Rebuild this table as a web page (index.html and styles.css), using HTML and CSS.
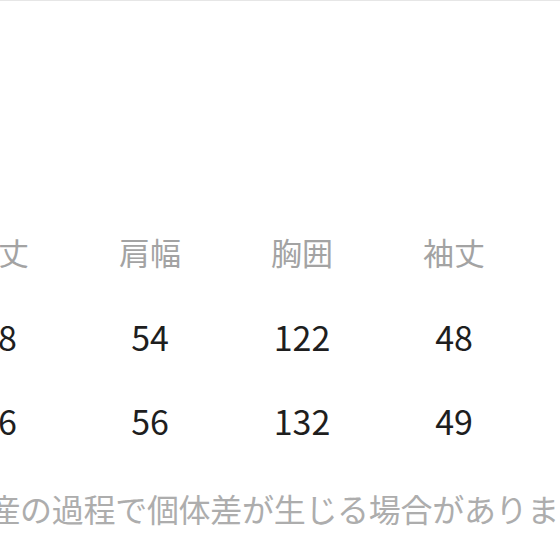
FILE: index.html
```html
<!DOCTYPE html>
<html lang="ja">
<head>
<meta charset="utf-8">
<link rel="stylesheet" href="styles.css">
</head>
<body>
<div class="page">
  <div class="size-table">
    <div class="row head">
      <div class="cell">着丈</div>
      <div class="cell">肩幅</div>
      <div class="cell">胸囲</div>
      <div class="cell">袖丈</div>
    </div>
    <div class="row">
      <div class="cell">68</div>
      <div class="cell">54</div>
      <div class="cell">122</div>
      <div class="cell">48</div>
    </div>
    <div class="row">
      <div class="cell">76</div>
      <div class="cell">56</div>
      <div class="cell">132</div>
      <div class="cell">49</div>
    </div>
  </div>
  <p class="note">※生産の過程で個体差が生じる場合があります。</p>
</div>
</body>
</html>
```

FILE: styles.css
```css
html, body {
  margin: 0;
  padding: 0;
  background: #ffffff;
}
body {
  width: 560px;
  height: 560px;
  overflow: hidden;
  font-family: "Noto Sans CJK JP", "Noto Sans", sans-serif;
}
.page {
  border-top: 1px solid #e6e6e6;
  height: 559px;
  overflow: hidden;
}
.size-table {
  margin-top: 206px;
  margin-left: -78px;
  display: grid;
}
.row {
  display: grid;
  grid-template-columns: repeat(4, 152px);
  height: 84px;
  align-items: center;
}
.row.head {
  height: 88px;
}
.cell {
  text-align: center;
  white-space: nowrap;
  font-size: 34px;
  line-height: 1;
  color: #1e1e1e;
}
.head .cell {
  font-size: 31px;
  color: #a3a3a3;
}
.note {
  margin: 3px 0 0 -75px;
  height: 84px;
  line-height: 84px;
  font-size: 32px;
  letter-spacing: -0.3px;
  color: #adadad;
  white-space: nowrap;
}
```
